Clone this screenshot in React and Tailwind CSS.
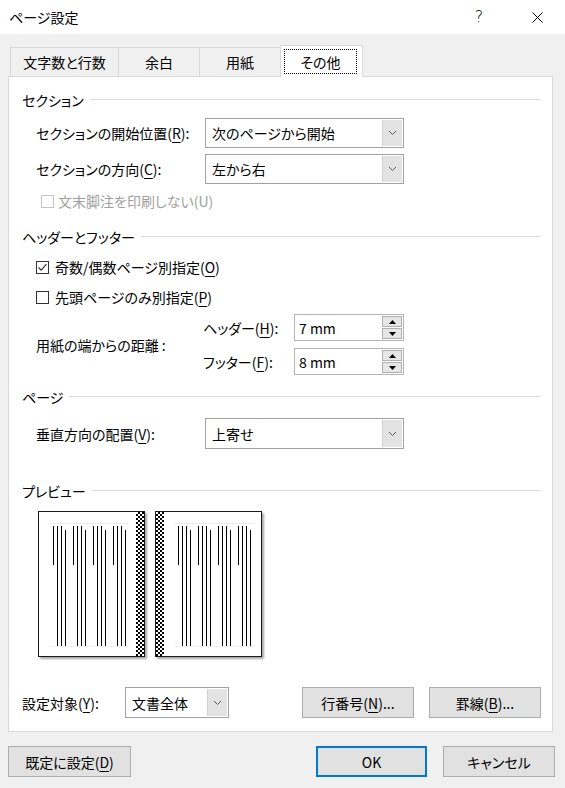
import React from "react";

const U = ({ children }) => (
  <span className="underline underline-offset-[3px] decoration-1">{children}</span>
);

function Chevron() {
  return (
    <svg width="9" height="6" viewBox="0 0 9 6">
      <path d="M1 1 L4.5 4.5 L8 1" fill="none" stroke="#5a5a5a" strokeWidth="1" />
    </svg>
  );
}

function Select({ value, className }) {
  return (
    <div className={"flex border border-[#a2a2a2] bg-white " + className}>
      <div className="flex-1 flex items-center pl-[6px] text-[14px]">{value}</div>
      <div className="w-[20px] my-px mr-px bg-[#e3e3e3] border-l border-[#cfcfcf] flex items-center justify-center">
        <Chevron />
      </div>
    </div>
  );
}

function Spin({ value }) {
  return (
    <div className="flex h-[27px] w-[110px] border border-[#b4b4b4] bg-white">
      <div className="flex-1 flex items-center pl-[4px] text-[14px]">{value}</div>
      <div className="w-[21px] flex flex-col py-px pr-px gap-px">
        <div className="flex-1 bg-[#e6e6e6] border border-[#b0b0b0] flex items-center justify-center">
          <svg width="7" height="4" viewBox="0 0 7 4">
            <path d="M0 4 L3.5 0 L7 4 Z" fill="#000" />
          </svg>
        </div>
        <div className="flex-1 bg-[#e6e6e6] border border-[#b0b0b0] flex items-center justify-center">
          <svg width="7" height="4" viewBox="0 0 7 4">
            <path d="M0 0 L3.5 4 L7 0 Z" fill="#000" />
          </svg>
        </div>
      </div>
    </div>
  );
}

function Checkbox({ checked, disabled }) {
  return (
    <div
      className={
        "w-[13px] h-[13px] border bg-white flex items-center justify-center shrink-0 " +
        (disabled ? "border-[#c4c4c4]" : "border-[#333333]")
      }
    >
      {checked && (
        <svg width="11" height="11" viewBox="0 0 11 11">
          <path d="M1.5 5.5 L4.2 8.2 L9.5 2.2" fill="none" stroke="#333333" strokeWidth="1.2" />
        </svg>
      )}
    </div>
  );
}

function Heading({ children, className }) {
  return (
    <div className={"flex items-center h-[20px] ml-[13px] mr-[11px] " + className}>
      <span className="text-[14px] text-black">{children}</span>
      <div className="flex-1 h-px bg-[#dcdcdc] ml-[6px] mt-[-2px]" />
    </div>
  );
}

function Button({ children, className }) {
  return (
    <div
      className={
        "flex items-center justify-center bg-[#e1e1e1] text-[14px] " + className
      }
    >
      {children}
    </div>
  );
}

function PageLines() {
  const groups = [14, 34, 54, 74];
  return (
    <svg width="97" height="144" viewBox="0 0 97 144" className="shrink-0">
      <line x1="10" y1="11.5" x2="90" y2="11.5" stroke="#ececec" strokeWidth="1" />
      <line x1="10" y1="134.5" x2="90" y2="134.5" stroke="#f2f2f2" strokeWidth="1" />
      {groups.map((g) => (
        <g key={g} stroke="#000" strokeWidth="1">
          <line x1={g + 0.5} y1="14" x2={g + 0.5} y2="53" />
          <line x1={g + 4.5} y1="14" x2={g + 4.5} y2="134" />
          <line x1={g + 8.5} y1="14" x2={g + 8.5} y2="134" />
          <line x1={g + 12.5} y1="18" x2={g + 12.5} y2="134" />
        </g>
      ))}
    </svg>
  );
}

function Checker() {
  return (
    <div className="w-[8px] h-full bg-[repeating-conic-gradient(#000_0_25%,#fff_0_50%)] bg-[length:4px_4px]" />
  );
}

function Page({ side }) {
  return (
    <div className="flex w-[107px] h-[146px] bg-white border border-[#1a1a1a] shadow-[2px_2px_2px_rgba(0,0,0,0.35)]">
      {side === "right" && <Checker />}
      <PageLines />
      {side === "left" && <Checker />}
    </div>
  );
}

export default function App() {
  return (
    <div className="w-[565px] h-[788px] overflow-hidden bg-[#f0f0f0] text-black font-['Noto_Sans_CJK_JP','Noto_Sans_CJK_SC',sans-serif] [font-feature-settings:'palt'] flex flex-col leading-none">
      {/* Title bar */}
      <div className="h-[34px] bg-white flex items-center shrink-0">
        <div className="pl-[9px] text-[14px] flex-1">ページ設定</div>
        <div className="w-[24px] text-center text-[16px] font-['DejaVu_Sans',sans-serif] font-extralight mr-[34px]">?</div>
        <div className="w-[24px] flex justify-center mr-[16px]">
          <svg width="11" height="11" viewBox="0 0 11 11">
            <path d="M0.5 0.5 L10.5 10.5 M10.5 0.5 L0.5 10.5" stroke="#000" strokeWidth="1" />
          </svg>
        </div>
      </div>

      {/* Tabs */}
      <div className="flex items-end h-[31px] ml-[10px] mt-[11px] shrink-0">
        <div className="w-[108px] h-[29px] border-t border-l border-[#d9d9d9] flex items-center justify-center text-[14px]">
          文字数と行数
        </div>
        <div className="w-[81px] h-[29px] border-t border-l border-[#d9d9d9] flex items-center justify-center text-[14px]">
          余白
        </div>
        <div className="w-[81px] h-[29px] border-t border-l border-[#d9d9d9] flex items-center justify-center text-[14px]">
          用紙
        </div>
        <div className="relative z-10 w-[83px] h-[32px] -mb-px bg-white border-t border-l border-r border-[#d9d9d9] flex pt-[3px] pl-[3px] pr-[5px] pb-[3px]">
          <div className="flex-1 border border-dotted border-black flex items-center justify-center text-[14px]">
            その他
          </div>
        </div>
      </div>

      {/* Panel */}
      <div className="ml-[8px] w-[545px] h-[656px] border border-[#d9d9d9] bg-white flex flex-col shrink-0">
        <Heading className="mt-[13px]">セクション</Heading>

        <div className="flex items-center h-[30px] mt-[8px] ml-[27px]">
          <div className="w-[169px] text-[14px]">
            セクションの開始位置(<U>R</U>):
          </div>
          <Select value="次のページから開始" className="w-[199px] h-[30px]" />
        </div>
        <div className="flex items-center h-[30px] mt-[6px] ml-[27px]">
          <div className="w-[169px] text-[14px]">
            セクションの方向(<U>C</U>):
          </div>
          <Select value="左から右" className="w-[199px] h-[30px]" />
        </div>
        <div className="flex items-center h-[20px] mt-[7px] ml-[32px] gap-[4px]">
          <Checkbox disabled />
          <span className="text-[14px] text-[#a0a0a0]">文末脚注を印刷しない(U)</span>
        </div>

        <Heading className="mt-[16px]">ヘッダーとフッター</Heading>

        <div className="flex items-center h-[20px] mt-[10px] ml-[27px] gap-[6px]">
          <Checkbox checked />
          <span className="text-[14px]">
            奇数/偶数ページ別指定(<U>O</U>)
          </span>
        </div>
        <div className="flex items-center h-[20px] mt-[10px] ml-[27px] gap-[6px]">
          <Checkbox />
          <span className="text-[14px]">
            先頭ページのみ別指定(<U>P</U>)
          </span>
        </div>

        <div className="flex items-center mt-[7px] ml-[27px] h-[61px]">
          <div className="w-[167px] text-[14px]">用紙の端からの距離 :</div>
          <div className="flex flex-col gap-[7px]">
            <div className="flex items-center">
              <div className="w-[91px] text-[14px]">
                ヘッダー(<U>H</U>):
              </div>
              <Spin value="7 mm" />
            </div>
            <div className="flex items-center">
              <div className="w-[91px] text-[14px]">
                フッター(<U>F</U>):
              </div>
              <Spin value="8 mm" />
            </div>
          </div>
        </div>

        <Heading className="mt-[12px]">ページ</Heading>

        <div className="flex items-center h-[31px] mt-[11px] ml-[27px]">
          <div className="w-[169px] text-[14px]">
            垂直方向の配置(<U>V</U>):
          </div>
          <Select value="上寄せ" className="w-[199px] h-[31px]" />
        </div>

        <Heading className="mt-[32px]">プレビュー</Heading>

        <div className="flex mt-[10px] ml-[29px] gap-[10px]">
          <Page side="left" />
          <Page side="right" />
        </div>

        <div className="flex items-center h-[31px] mt-[30px] ml-[13px] mr-[11px]">
          <div className="w-[103px] text-[14px]">
            設定対象(<U>Y</U>):
          </div>
          <Select value="文書全体" className="w-[104px] h-[31px]" />
          <div className="flex-1" />
          <Button className="w-[112px] h-[31px] border border-[#adadad]">
            行番号(<U>N</U>)...
          </Button>
          <Button className="w-[112px] h-[31px] border border-[#adadad] ml-[15px]">
            罫線(<U>B</U>)...
          </Button>
        </div>
      </div>

      {/* Bottom buttons */}
      <div className="flex items-center h-[31px] mt-[14px] ml-[8px] mr-[10px] shrink-0">
        <Button className="w-[123px] h-[31px] border border-[#adadad]">
          既定に設定(<U>D</U>)
        </Button>
        <div className="flex-1" />
        <Button className="w-[111px] h-[31px] border-2 border-[#0078d7]">OK</Button>
        <Button className="w-[112px] h-[31px] border border-[#adadad] ml-[16px]">
          キャンセル
        </Button>
      </div>
    </div>
  );
}
